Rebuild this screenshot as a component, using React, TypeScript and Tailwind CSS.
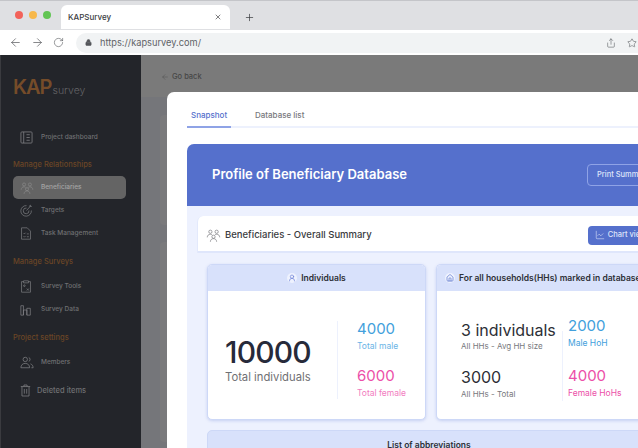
import { ArrowLeft, ArrowRight, RotateCw, Lock, X, Plus, Share, Star, ChartLine, Home, UserRound } from "lucide-react";

const font = "font-['Inter','Liberation_Sans',sans-serif]";

const PeopleIcon = ({ className }: { className: string }) => (
  <svg viewBox="0 0 24 24" fill="none" stroke="currentColor" strokeWidth="1.1" className={className}>
    <circle cx="7" cy="6" r="2.6" />
    <circle cx="17" cy="6" r="2.6" />
    <circle cx="12" cy="14" r="2.6" />
    <path d="M2 15c0-3 2-5 5-5 1 0 2 .3 2.8 1M22 15c0-3-2-5-5-5-1 0-2 .3-2.8 1M7 22c0-3 2-5 5-5s5 2 5 5" />
  </svg>
);

const SideItem = ({ icon, label, active }: { icon: React.ReactNode; label: string; active?: boolean }) => (
  <div className={`flex h-[23px] items-center rounded-[5px] pl-[7px] ${active ? "bg-[#646464]" : ""}`}>
    <div className="flex w-[21px] items-center text-[#8d8d8d]">{icon}</div>
    <span className={`text-[6.5px] font-medium ${active ? "text-[#a5a5a5]" : "text-[#6f7072]"}`}>{label}</span>
  </div>
);

const SideTitle = ({ children }: { children: string }) => (
  <div className="text-[7.5px] font-medium leading-[11px] text-[#6b4526]">{children}</div>
);

const DocIcon = () => (
  <svg viewBox="0 0 14 16" fill="none" stroke="#85868a" strokeWidth="0.8" className="h-[13px] w-[12px]">
    <path d="M1.500 1h7l4 4v10h-11z" />
    <path d="M4 7.500l1 1 1.500-1.500M8 8.500h2.500M4 11.500l1 1 1.500-1.500M8 12h2.500" />
  </svg>
);

const Stat = ({ value, label, color, labelColor, top }: { value: string; label: string; color: string; labelColor: string; top: string }) => (
  <div className={top}>
    <div className={`text-[15px] leading-[18px] ${color}`}>{value}</div>
    <div className={`mt-[2px] text-[8.5px] leading-[12px] ${labelColor}`}>{label}</div>
  </div>
);

export default function App() {
  return (
    <div className={`relative h-[448px] w-[638px] overflow-hidden bg-white ${font}`}>
      {/* browser chrome */}
      <div className="flex h-[30px] items-end border-t border-[#c4c5c9] bg-[#dfe0e3] pb-[1px]">
        <div className="flex gap-[6px] pb-[10px] pl-[15px] pr-[10px]">
          <span className="h-[8px] w-[8px] rounded-full bg-[#f2625a]" />
          <span className="h-[8px] w-[8px] rounded-full bg-[#f7b84b]" />
          <span className="h-[8px] w-[8px] rounded-full bg-[#62c554]" />
        </div>
        <div className="flex h-[24px] w-[169px] items-center justify-between rounded-t-[6px] bg-white pl-[7px] pr-[8px]">
          <span className="text-[8px] font-medium text-[#3a3b3e]">KAPSurvey</span>
          <X className="h-[8px] w-[8px] text-[#3f4043]" strokeWidth={2} />
        </div>
        <Plus className="mb-[6px] ml-[14px] h-[11px] w-[11px] text-[#3f4043]" strokeWidth={1.6} />
      </div>
      <div className="flex h-[25px] items-center bg-white">
        <div className="flex w-[76px] items-center gap-[9px] pl-[9px] text-[#55575b]">
          <ArrowLeft className="h-[13px] w-[13px]" strokeWidth={1.3} />
          <ArrowRight className="h-[13px] w-[13px]" strokeWidth={1.3} />
          <RotateCw className="h-[11px] w-[11px]" strokeWidth={1.3} />
        </div>
        <div className="flex h-[20px] flex-1 items-center rounded-l-[10px] bg-[#f1f3f4] pl-[9px]">
          <Lock className="h-[7px] w-[7px] fill-[#55575b] text-[#55575b]" />
          <span className="ml-[8px] text-[9.25px] text-[#606266]">https://kapsurvey.com/</span>
          <div className="ml-auto flex items-center gap-[11px] text-[#4f5155]">
            <Share className="h-[10px] w-[10px]" strokeWidth={1.3} />
            <Star className="mr-[1px] h-[10px] w-[10px]" strokeWidth={1.3} />
          </div>
        </div>
      </div>

      {/* dimmed app */}
      <div className="flex h-[393px]">
        <aside className="w-[141px] shrink-0 border-l border-[#3a3b3f] bg-[#23252a] pl-[12px] pr-[15px] pt-[20px]">
          <div className="flex h-[22px] items-end">
            <span className="text-[20px] font-semibold leading-[20px] tracking-[-1px] text-[#754c29]">KAP</span>
            <span className="ml-[1px] text-[10.5px] font-light leading-[12px] text-[#636467]">survey</span>
          </div>
          <div className="mt-[29px] flex flex-col">
            <SideItem label="Project dashboard" icon={<svg viewBox="0 0 14 14" fill="none" stroke="#85868a" strokeWidth="0.8" className="h-[13px] w-[13px]"><rect x="1" y="1" width="12" height="12" rx="1" /><path d="M4 1v12M7 4h3.500M7 7h3.500M7 10h3.500" /></svg>} />
          </div>
          <div className="mt-[10px]"><SideTitle>Manage Relationships</SideTitle></div>
          <div className="mt-[6px] flex flex-col">
            <SideItem active label="Beneficiaries" icon={<PeopleIcon className="h-[14px] w-[14px]" />} />
            <SideItem label="Targets" icon={<svg viewBox="0 0 16 16" fill="none" stroke="#85868a" strokeWidth="0.8" className="h-[13px] w-[13px]"><path d="M8 2a6.500 6.500 0 1 0 6 6M8 5a3.500 3.500 0 1 0 3 3M8 8l5-5.500M11 3l2-1.500V3h1.500" /></svg>} />
            <SideItem label="Task Management" icon={<DocIcon />} />
          </div>
          <div className="mt-[11px]"><SideTitle>Manage Surveys</SideTitle></div>
          <div className="mt-[8px] flex flex-col">
            <SideItem label="Survey Tools" icon={<svg viewBox="0 0 14 16" fill="none" stroke="#85868a" strokeWidth="0.8" className="h-[13px] w-[12px]"><path d="M4 2H1.500v13h11V2H10M4 1h6v2.500H4z" /><circle cx="5" cy="7" r="1" /><path d="M8 10.500l2.500 2.500M10.500 10.500L8 13" /></svg>} />
            <SideItem label="Survey Data" icon={<svg viewBox="0 0 14 14" fill="none" stroke="#85868a" strokeWidth="0.8" className="h-[12px] w-[12px]"><path d="M1 13V2h3v11zM4 13V7h4v6M8 13V5h4v8z" /></svg>} />
          </div>
          <div className="mt-[11px]"><SideTitle>Project settings</SideTitle></div>
          <div className="mt-[8px] flex flex-col">
            <SideItem label="Members" icon={<svg viewBox="0 0 16 14" fill="none" stroke="#85868a" strokeWidth="0.8" className="h-[13px] w-[14px]"><circle cx="6" cy="3.500" r="2.500" /><path d="M10 1.200a2.500 2.500 0 0 1 0 4.600M1 13c0-3 2-5 5-5s5 2 5 5zM12 8.500c1.800.7 3 2.300 3 4.500h-2" /></svg>} />
          </div>
          <div className="mt-[5px] flex h-[23px] items-center pl-[7px]">
            <svg viewBox="0 0 14 16" fill="none" stroke="#85868a" strokeWidth="0.9" className="h-[13px] w-[11px]"><path d="M1 3h12M5 3V1h4v2M2.500 3v12h9V3M5.500 6v6M8.500 6v6" /></svg>
            <span className="ml-[6px] text-[7.5px] font-medium text-[#6f7072]">Deleted items</span>
          </div>
        </aside>
        <main className="flex-1 bg-[#75767a]">
          <div className="flex h-[42px] items-center gap-[3px] bg-[#7a7a7a] pl-[20px] pt-[1px] text-[#474747]">
            <ArrowLeft className="h-[8px] w-[8px]" strokeWidth={1.2} />
            <span className="text-[7.5px] font-medium">Go back</span>
          </div>
          <div className="ml-[19px] mt-[18px] h-[110px] rounded-[4px] bg-[#7a7a7c]" />
          <div className="ml-[19px] mt-[17px] h-[200px] rounded-[4px] bg-[#7a7a7c]" />
        </main>
      </div>

      {/* modal */}
      <div className="absolute left-[167px] top-[92px] h-[380px] w-[520px] rounded-t-[7px] bg-white pl-[20px] pt-[16px]">
        <div className="flex border-b-2 border-[#edf1fd] text-[8px] font-medium">
          <div className="-mb-[2px] h-[20px] w-[44px] border-b-2 border-[#8fa3e6] pl-[4px] pt-[1px] text-[#5570cc]">Snapshot</div>
          <div className="ml-[24px] pt-[1px] text-[#77787c]">Database list</div>
        </div>
        <div className="mt-[16px] overflow-hidden rounded-t-[7px] bg-[#edf1fe]">
          <div className="flex h-[62px] items-center bg-[#5570cc] pl-[25px]">
            <h1 className="text-[13px] font-semibold text-white">Profile of Beneficiary Database</h1>
            <div className="ml-[180px] flex h-[22px] w-[90px] items-center rounded-[4px] border border-[#8fa3e6] pl-[9px] text-[7.5px] font-medium text-[#dfe5fa]">Print Summary</div>
          </div>
          <div className="ml-[10px] mt-[10px] rounded-tl-[6px] border-l border-[#e3e9fb] bg-white">
            <div className="flex h-[37px] items-center border-b-2 border-[#dfe6fb] pl-[8px] pt-[3px]">
              <PeopleIcon className="h-[15px] w-[15px] shrink-0 text-[#77787c]" />
              <span className="ml-[4px] shrink-0 text-[9.5px] font-medium text-[#3a3b40]">Beneficiaries - Overall Summary</span>
              <div className="ml-[216px] flex h-[19px] w-[70px] shrink-0 items-center gap-[3px] rounded-[4px] bg-[#5570cc] pl-[7px] text-[7.5px] font-medium text-[#dfe5fa]">
                <ChartLine className="h-[10px] w-[10px]" strokeWidth={1.4} />
                Chart view
              </div>
            </div>
          </div>
          <div className="ml-[10px] bg-[#edf1fe] pl-[10px] pt-[11px]">
            <div className="flex gap-[10px]">
              <section className="h-[156px] w-[219px] shrink-0 overflow-hidden rounded-[5px] border border-[#cdd8f7] bg-white shadow-[0_1px_3px_rgba(85,112,204,0.25)]">
                <div className="flex h-[26px] items-center justify-center gap-[4px] bg-[#d8e1fb] text-[8.5px] font-semibold text-[#2d2f36]">
                  <span className="flex h-[10px] w-[10px] items-center justify-center rounded-full bg-[#eef2fe]"><UserRound className="h-[8px] w-[8px] text-[#6b7fd6]" /></span>
                  Individuals
                </div>
                <div className="flex pl-[17px]">
                  <div className="mt-[46px] w-[112px]">
                    <div className="text-[30px] font-medium leading-[30px] tracking-[-0.8px] text-[#272a3a]">10000</div>
                    <div className="mt-[3px] text-[11.25px] leading-[14px] text-[#6f7074]">Total individuals</div>
                  </div>
                  <div className="mt-[30px] h-[78px] w-px bg-[#edf1fd]" />
                  <div className="ml-[19px] mt-[29px]">
                    <Stat value="4000" label="Total male" color="text-[#42a0dc]" labelColor="text-[#6ab4e6]" top="" />
                    <Stat value="6000" label="Total female" color="text-[#ec4fa8]" labelColor="text-[#f27cc0]" top="mt-[15px]" />
                  </div>
                </div>
              </section>
              <section className="h-[156px] w-[260px] shrink-0 overflow-hidden rounded-l-[5px] border border-r-0 border-[#cdd8f7] bg-white shadow-[0_1px_3px_rgba(85,112,204,0.25)]">
                <div className="flex h-[26px] items-center gap-[4px] bg-[#d8e1fb] pl-[8px] text-[8.5px] font-semibold text-[#2d2f36]">
                  <span className="flex h-[10px] w-[10px] items-center justify-center rounded-full bg-[#eef2fe]"><Home className="h-[8px] w-[8px] text-[#5570cc]" /></span>
                  For all households(HHs) marked in database
                </div>
                <div className="flex pl-[24px]">
                  <div className="mt-[30px] w-[101px]">
                    <div className="text-[16px] leading-[18px] text-[#2d2f36]">3 individuals</div>
                    <div className="mt-[1px] text-[8px] leading-[12px] text-[#77787c]">All HHs - Avg HH size</div>
                    <div className="mt-[16px] text-[16px] leading-[18px] text-[#2d2f36]">3000</div>
                    <div className="mt-[2px] text-[8px] leading-[12px] text-[#77787c]">All HHs - Total</div>
                  </div>
                  <div className="mt-[40px] h-[70px] w-px bg-[#edf1fd]" />
                  <div className="ml-[5px] mt-[26px]">
                    <Stat value="2000" label="Male HoH" color="text-[#42a0dc]" labelColor="text-[#42a0dc]" top="" />
                    <Stat value="4000" label="Female HoHs" color="text-[#ec4fa8]" labelColor="text-[#ec4fa8]" top="mt-[18px]" />
                  </div>
                </div>
              </section>
            </div>
            <div className="mt-[10px] flex h-[30px] w-[444px] items-center justify-center rounded-t-[5px] border border-[#cdd8f7] bg-[#d8e1fb] text-[8.5px] font-semibold text-[#2d2f36]">
              List of abbreviations
            </div>
          </div>
        </div>
      </div>
    </div>
  );
}
